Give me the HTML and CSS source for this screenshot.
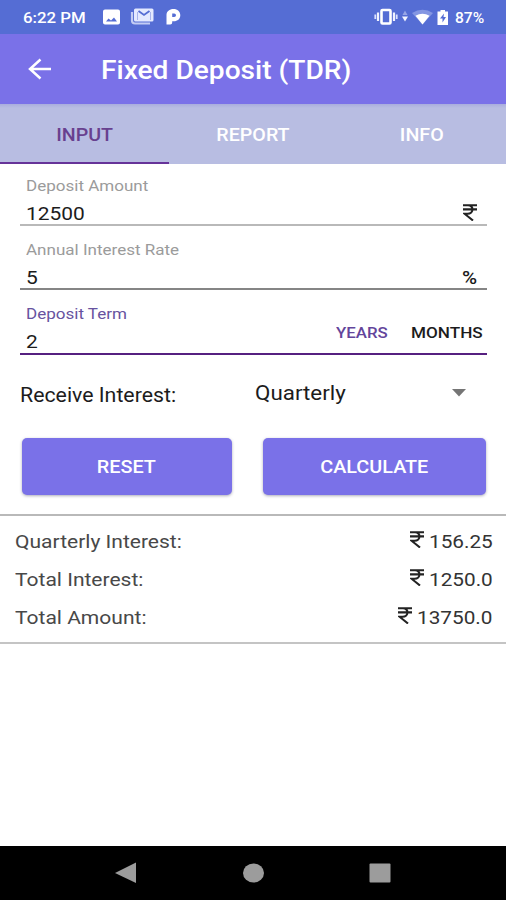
FILE: index.html
```html
<!DOCTYPE html>
<html lang="en">
<head>
<meta charset="utf-8">
<title>Fixed Deposit (TDR)</title>
<link rel="stylesheet" href="styles.css">
</head>
<body>
<div class="screen">
  <header class="status">
    <span class="time wide">6:22 PM</span>
    <svg class="notifications" width="80" height="20" viewBox="0 0 80 20">
      <path fill="#fff" fill-rule="evenodd" d="M2 1.500H15Q17 1.500 17 3.500V14.500Q17 16.500 15 16.500H2Q0 16.500 0 14.500V3.500Q0 1.500 2 1.500ZM3 13.500H14L11 9.500L8 12.500L5.500 10.500Z"/>
      <path d="M29 4V12.500Q29 15.500 32 15.500H47" fill="none" stroke="#c3ccf4" stroke-width="2.200"/>
      <rect x="31" y=".5" width="19.500" height="13" rx="1.500" fill="#e4e9ff"/>
      <path d="M34.500 12V4M47.500 4V12" fill="none" stroke="#a9b5ec" stroke-width="1"/>
      <path d="M35.500 3L41 7L46.500 3" fill="none" stroke="#556dd4" stroke-width="1.800"/>
      <path fill="#fff" fill-rule="evenodd" d="M63.500 16.500V7C63.500 3.500 66.500 1 70.500 1C74.500 1 77.300 3.700 77.300 7.300C77.300 11 74.500 13.300 70.800 13.300H69.200V14.500Q69.200 16.500 67.200 16.500ZM69.200 5.500H71.200Q73 5.500 73 7.200Q73 9 71.200 9H69.200Z"/>
    </svg>
    <svg class="system" width="76" height="20" viewBox="0 0 76 20">
      <rect x="7.500" y="2" width="9" height="13.500" rx="1" fill="none" stroke="#fff" stroke-width="2.600"/>
      <path d="M4 4.500V13M20 4.500V13" stroke="#f0f3ff" stroke-width="2.200"/>
      <path d="M1.300 6.500V11M22.700 6.500V11" stroke="#dbe2ff" stroke-width="1.800"/>
      <path d="M28.500 7L31 2.500L33.500 7Z" fill="#98a6e6"/>
      <path d="M28 8.500H34L31 13.500Z" fill="#f3f5ff"/>
      <path d="M38 5Q48.500 -1.500 59 5L48.500 16.500Z" fill="#8496e2"/>
      <path d="M41.500 7.800Q48.500 3.500 55.500 7.800L48.500 16.500Z" fill="#fff"/>
      <path fill="#fff" fill-rule="evenodd" d="M63.500 3.500H66.500V2H71V3.500H74V17H63.500ZM70 5.500L66 10.500H68.500V14.500L72 9H69.500Z"/>
    </svg>
    <span class="battery wide">87%</span>
  </header>

  <div class="appbar">
    <svg class="back" width="24" height="22" viewBox="0 0 24 22">
      <path d="M12.500 1.500L2 11L12.500 20.500M2 11H23" fill="none" stroke="#fff" stroke-width="2.500"/>
    </svg>
    <h1 class="title wide">Fixed Deposit (TDR)</h1>
  </div>

  <nav class="tabs">
    <div class="tab active"><span class="wide">INPUT</span></div>
    <div class="tab"><span class="wide">REPORT</span></div>
    <div class="tab"><span class="wide">INFO</span></div>
  </nav>

  <main class="form">
    <div class="field amount">
      <div class="label"><span class="wide">Deposit Amount</span></div>
      <div class="value"><span class="wide">12500</span><svg class="rupee" viewBox="0 0 14 17"><path d="M0 1.200H14M0 5.400H14M3 1.200H5C11 1.200 11 9.700 4.500 9.700H1.500L10 16.500"/></svg></div>
    </div>
    <div class="field rate">
      <div class="label"><span class="wide">Annual Interest Rate</span></div>
      <div class="value"><span class="wide">5</span><span class="percent">%</span></div>
    </div>
    <div class="field term">
      <div class="entry">
        <div class="label"><span class="wide">Deposit Term</span></div>
        <div class="value"><span class="wide">2</span></div>
      </div>
      <div class="units"><span class="years">YEARS</span><span class="months">MONTHS</span></div>
    </div>
    <div class="receive">
      <span class="caption">Receive Interest:</span>
      <div class="select"><span class="choice">Quarterly</span><svg width="14" height="8" viewBox="0 0 14 8"><path d="M0 0H14L7 7.500Z" fill="#757575"/></svg></div>
    </div>
    <div class="actions">
      <div class="button reset"><span class="wide">RESET</span></div>
      <div class="button"><span class="wide">CALCULATE</span></div>
    </div>
  </main>

  <section class="results">
    <div class="row"><span class="name">Quarterly Interest:</span><span class="sum"><svg class="rupee" viewBox="0 0 14 17"><path d="M0 1.200H14M0 5.400H14M3 1.200H5C11 1.200 11 9.700 4.500 9.700H1.500L10 16.500"/></svg><span class="num">156.25</span></span></div>
    <div class="row"><span class="name">Total Interest:</span><span class="sum"><svg class="rupee" viewBox="0 0 14 17"><path d="M0 1.200H14M0 5.400H14M3 1.200H5C11 1.200 11 9.700 4.500 9.700H1.500L10 16.500"/></svg><span class="num">1250.0</span></span></div>
    <div class="row"><span class="name">Total Amount:</span><span class="sum"><svg class="rupee" viewBox="0 0 14 17"><path d="M0 1.200H14M0 5.400H14M3 1.200H5C11 1.200 11 9.700 4.500 9.700H1.500L10 16.500"/></svg><span class="num long">13750.0</span></span></div>
  </section>

  <footer class="navbar">
    <svg width="22" height="22" viewBox="0 0 22 22"><path d="M0 11L21 .5V21Z" fill="#9c9c9c"/></svg>
    <svg width="22" height="22" viewBox="0 0 22 22"><ellipse cx="11.500" cy="11" rx="10.500" ry="9.500" fill="#9c9c9c"/></svg>
    <svg width="22" height="22" viewBox="0 0 22 22"><rect x=".5" y="1.500" width="21" height="19" rx="1" fill="#9c9c9c"/></svg>
  </footer>
</div>
</body>
</html>
```
FILE: styles.css
```css
* { box-sizing: border-box; }

body {
  margin: 0;
  background: #fff;
  font-family: Roboto, sans-serif;
  color: #1c1c1c;
}

svg { display: block; flex: none; }
span { white-space: nowrap; }

/* Horizontally expanded lettering used across the screen */
.wide, .percent, .years, .months, .caption, .choice, .name, .num {
  display: block;
  transform: scaleX(1.12);
  transform-origin: left center;
}

.screen {
  width: 506px;
  height: 900px;
  display: flex;
  flex-direction: column;
}

.status {
  height: 34px;
  padding: 0 22px 0 23px;
  display: flex;
  align-items: center;
  background: #556dd4;
  color: #fff;
  font-weight: 500;
  line-height: 20px;
}
.time { width: 80px; font-size: 15.3px; padding-top: 2px; transform: scaleX(1.1); }
.notifications { margin-top: 2px; }
.system { margin: 2px 5px 0 auto; }
.battery { width: 29px; font-size: 15px; transform: scaleX(1.04); padding-top: 2px; }

.appbar {
  height: 70px;
  padding: 0 28px;
  display: flex;
  align-items: center;
  background: #7a71e8;
  color: #fff;
}
.title {
  margin: 4px 0 0 49px;
  font-size: 25px;
  font-weight: 500;
  line-height: 30px;
  white-space: nowrap;
  transform: scaleX(1.125);
}

.tabs {
  height: 60px;
  display: grid;
  grid-template-columns: repeat(3, 1fr);
  background: linear-gradient(#a9addd, #b8bde2 4px);
  color: #fff;
  font-size: 17.7px;
  font-weight: 500;
}
.tab {
  display: flex;
  justify-content: center;
  padding-top: 20px;
  line-height: 22px;
}
.tab .wide { transform-origin: center; transform: scaleX(1.11); }
.active { color: #68408f; border-bottom: 2.500px solid #663399; }

.form { height: 350px; padding: 12px 20px 0; }

.field {
  height: 50px;
  width: 467px;
  margin-bottom: 14px;
  border-bottom: 2px solid #b9b9b9;
}
.label {
  height: 20px;
  padding-left: 5.500px;
  line-height: 20px;
  font-size: 15px;
  color: #9b9b9b;
}
.value {
  height: 20px;
  margin-top: 8px;
  padding: 0 10px 0 6px;
  display: flex;
  justify-content: space-between;
  line-height: 20px;
  font-size: 18.700px;
}
.label .wide { display: inline-block; transform: scaleX(1.135); }
.rupee { width: 14px; height: 17px; }
.rupee path { fill: none; stroke: #222; stroke-width: 2.100; }
.percent { font-size: 18px; width: 15px; font-weight: 500; transform: scaleX(1.14); }
.rate { border-color: #858585; }
.term {
  height: 51px;
  margin-bottom: 0;
  display: flex;
  justify-content: space-between;
  border-color: #562080;
}
.term .label { color: #6753a0; }
.units {
  display: flex;
  width: 151px;
  padding-top: 19px;
  line-height: 20px;
  font-size: 15.300px;
  font-weight: 500;
}
.years { width: 75px; color: #63459b; transform: scaleX(1.1); }

.receive {
  height: 83px;
  padding-top: 27px;
  display: flex;
  line-height: 24px;
}
.caption { width: 235px; padding-top: 2px; font-size: 19.300px; transform: scaleX(1.105); }
.select { width: 211px; display: flex; justify-content: space-between; font-size: 19.300px; }
.choice { transform: scaleX(1.16); }
.select svg { margin-top: 7px; }

.actions { display: flex; gap: 31px; padding-left: 1.500px; }
.button {
  width: 223px;
  height: 57px;
  padding-top: 1px;
  display: flex;
  align-items: center;
  justify-content: center;
  border-radius: 5px;
  background: #7a71e8;
  box-shadow: 0 1px 3px rgba(70, 70, 100, .45);
  color: #fff;
  font-size: 17.700px;
  font-weight: 500;
  line-height: 22px;
}
.button .wide { transform-origin: center; transform: scaleX(1.12); }
.reset { width: 210.500px; }

.results {
  height: 130px;
  padding: 7px 13px 0 15px;
  border-top: 2px solid #b9b9b9;
  border-bottom: 2px solid #c4c4c4;
  font-size: 18.700px;
}
.row {
  height: 38px;
  display: flex;
  justify-content: space-between;
  line-height: 38px;
}
.name { color: #484848; transform: scaleX(1.125); }
.sum { display: flex; }
.sum .rupee { margin: 8px 5px 0 0; }
.num { width: 64px; color: #333; transform: scaleX(1.11); }
.long { width: 76px; }

.navbar {
  height: 54px;
  margin-top: auto;
  padding: 0 115px;
  display: flex;
  align-items: center;
  justify-content: space-between;
  background: #000;
}
```
